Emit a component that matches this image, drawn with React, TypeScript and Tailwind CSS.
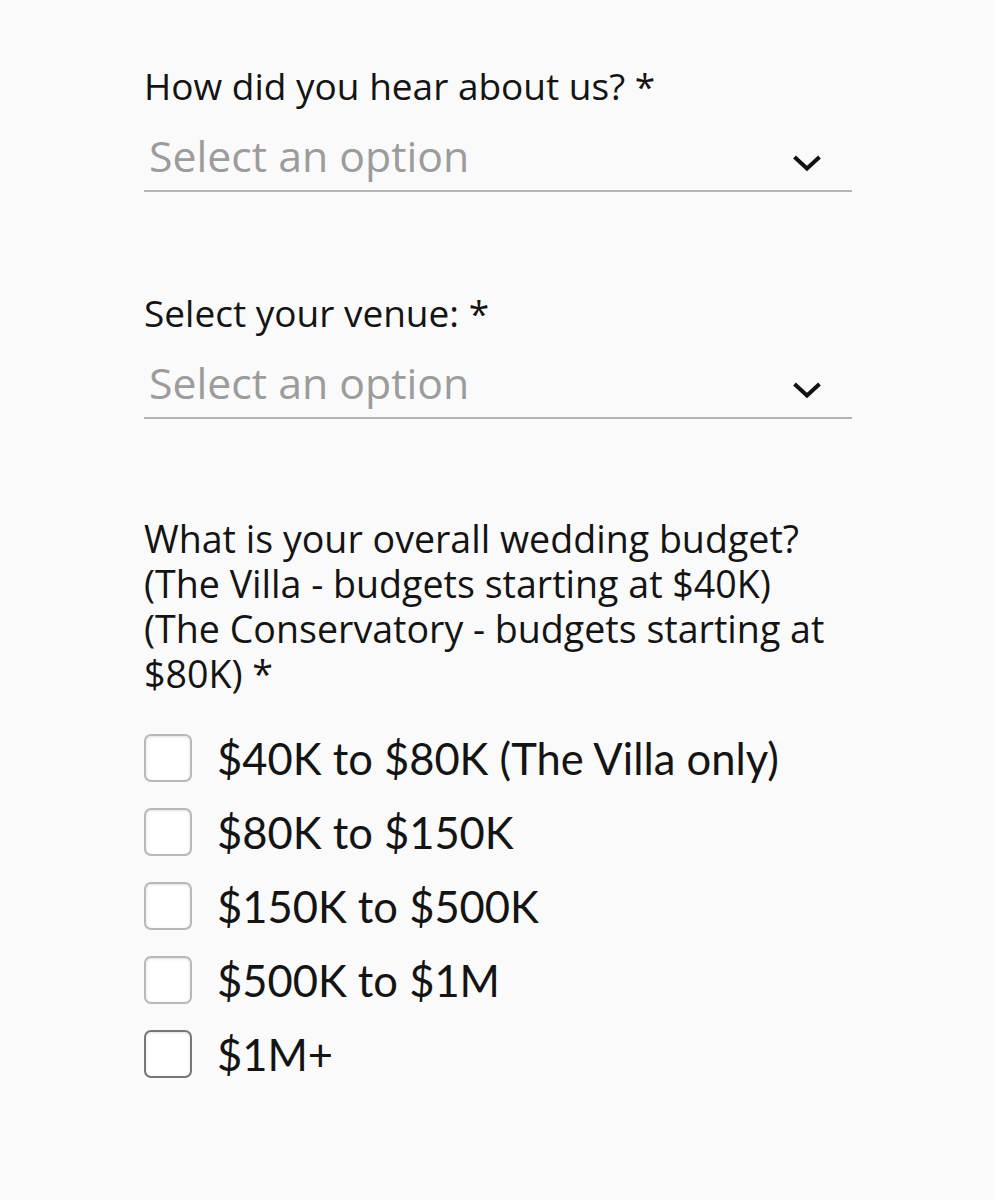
import React from "react";

function Chevron() {
  return (
    <svg width="30" height="18" viewBox="0 0 30 18" fill="none" className="mt-[46px] shrink-0">
      <path d="M2.5 3 L15 14.5 L27.5 3" stroke="#111" strokeWidth="4" strokeLinecap="butt" strokeLinejoin="miter" />
    </svg>
  );
}

function SelectField({ label }: { label: string }) {
  return (
    <div className="flex flex-col">
      <div className="text-[37px] leading-[44px] text-[#141414]">{label}</div>
      <div className="flex items-start justify-between border-b-2 border-[#b4b4b4] h-[84px] pl-[5px] pr-[30px]">
        <span className="mt-[23px] text-[42.8px] leading-[50px] text-[#9c9c9c]">Select an option</span>
        <Chevron />
      </div>
    </div>
  );
}

function Check({ label, dark }: { label: string; dark?: boolean }) {
  return (
    <div className="flex items-center gap-[25px] h-[48px]">
      <div
        className={
          "w-[48px] h-[48px] shrink-0 rounded-[7px] bg-white border-2 shadow-[inset_0_1px_3px_rgba(0,0,0,0.12)] " +
          (dark ? "border-[#76767b]" : "border-[#b7b7bc]")
        }
      />
      <span className="text-[43.5px] leading-[48px] text-[#141414] font-['Lato',sans-serif] whitespace-nowrap">
        {label}
      </span>
    </div>
  );
}

export default function App() {
  return (
    <div className="min-h-[1200px] w-[995px] bg-[#fafafa] font-['Open_Sans',sans-serif]">
      <div className="pl-[144px] w-[852px] pt-[64px] flex flex-col">
        <SelectField label="How did you hear about us? *" />
        <div className="h-[99px]" />
        <SelectField label="Select your venue: *" />
        <div className="h-[97px]" />
        <div className="text-[37.6px] leading-[45px] text-[#141414] whitespace-nowrap">
          What is your overall wedding budget?
          <br />
          (The Villa - budgets starting at $40K)
          <br />
          (The Conservatory - budgets starting at
          <br />
          $80K) *
        </div>
        <div className="flex flex-col gap-[26px] mt-[38px]">
          <Check label="$40K to $80K (The Villa only)" />
          <Check label="$80K to $150K" />
          <Check label="$150K to $500K" />
          <Check label="$500K to $1M" />
          <Check label="$1M+" dark />
        </div>
      </div>
    </div>
  );
}
